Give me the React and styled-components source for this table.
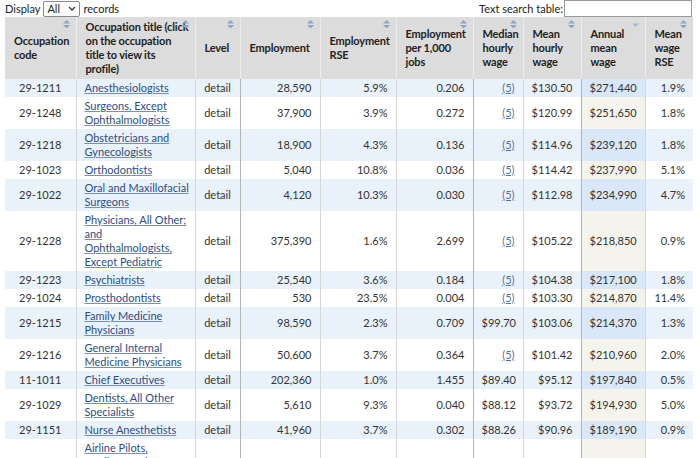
import React from "react";
import styled, { createGlobalStyle, css } from "styled-components";

const GlobalStyle = createGlobalStyle`
  html, body {
    margin: 0;
    padding: 0;
    background: #fff;
    font-family: Lato, "Liberation Sans", sans-serif;
    color: #333;
  }
`;

const columns = [
  { key: "code", width: 71, align: "center", title: "Occupation\ncode" },
  { key: "title", width: 119, align: "left", title: "Occupation title (click\non the occupation\ntitle to view its\nprofile)" },
  { key: "level", width: 45, align: "center", title: "Level" },
  { key: "emp", width: 80, align: "right", title: "Employment", strong: true },
  { key: "empRse", width: 76, align: "right", title: "Employment\nRSE" },
  { key: "perK", width: 77, align: "right", title: "Employment\nper 1,000\njobs" },
  { key: "median", width: 50, align: "right", title: "Median\nhourly\nwage", strong: true },
  { key: "meanH", width: 58, align: "right", title: "Mean\nhourly\nwage" },
  { key: "annual", width: 64, align: "right", title: "Annual\nmean\nwage", strong: true, sorted: true },
  { key: "wageRse", width: 48, align: "right", title: "Mean\nwage\nRSE" },
];

const rows = [
  ["29-1211", "Anesthesiologists", "28,590", "5.9%", "0.206", null, "$130.50", "$271,440", "1.9%"],
  ["29-1248", "Surgeons, Except\nOphthalmologists", "37,900", "3.9%", "0.272", null, "$120.99", "$251,650", "1.8%"],
  ["29-1218", "Obstetricians and\nGynecologists", "18,900", "4.3%", "0.136", null, "$114.96", "$239,120", "1.8%"],
  ["29-1023", "Orthodontists", "5,040", "10.8%", "0.036", null, "$114.42", "$237,990", "5.1%"],
  ["29-1022", "Oral and Maxillofacial\nSurgeons", "4,120", "10.3%", "0.030", null, "$112.98", "$234,990", "4.7%"],
  ["29-1228", "Physicians, All Other;\nand\nOphthalmologists,\nExcept Pediatric", "375,390", "1.6%", "2.699", null, "$105.22", "$218,850", "0.9%"],
  ["29-1223", "Psychiatrists", "25,540", "3.6%", "0.184", null, "$104.38", "$217,100", "1.8%"],
  ["29-1024", "Prosthodontists", "530", "23.5%", "0.004", null, "$103.30", "$214,870", "11.4%"],
  ["29-1215", "Family Medicine\nPhysicians", "98,590", "2.3%", "0.709", "$99.70", "$103.06", "$214,370", "1.3%"],
  ["29-1216", "General Internal\nMedicine Physicians", "50,600", "3.7%", "0.364", null, "$101.42", "$210,960", "2.0%"],
  ["11-1011", "Chief Executives", "202,360", "1.0%", "1.455", "$89.40", "$95.12", "$197,840", "0.5%"],
  ["29-1029", "Dentists, All Other\nSpecialists", "5,610", "9.3%", "0.040", "$88.12", "$93.72", "$194,930", "5.0%"],
  ["29-1151", "Nurse Anesthetists", "41,960", "3.7%", "0.302", "$88.26", "$90.96", "$189,190", "0.9%"],
  ["53-2011", "Airline Pilots,\nCopilots, and\nFlight\nEngineers", "74,100", "2.6%", "0.502", null, "$90.11", "$187,430", "0.8%"],
];

const Page = styled.div`
  font-size: 11px;
  line-height: 14px;
`;

const Toolbar = styled.div`
  display: flex;
  justify-content: space-between;
  align-items: center;
  height: 17px;
  padding: 0 8px 0 5px;
`;

const Control = styled.label`
  display: flex;
  align-items: center;
  gap: 3px;
  color: #222;
`;

const SelectBox = styled.span`
  display: inline-flex;
  align-items: center;
  justify-content: space-between;
  box-sizing: border-box;
  width: 37px;
  height: 16px;
  padding: 0 3px;
  border: 1px solid #8a8a8a;
  border-radius: 2px;
  background: #fff;
`;

const SearchInput = styled.span`
  display: inline-block;
  box-sizing: border-box;
  width: 128px;
  height: 17px;
  margin-left: -2px;
  border: 1px solid #9a9a9a;
  background: #fff;
`;

const Table = styled.table`
  margin-left: 5px;
  border-collapse: collapse;
  table-layout: fixed;
  width: 688px;
`;

const HeadCell = styled.th`
  position: relative;
  background: #dcdcdc;
  color: #222;
  font-weight: 700;
  letter-spacing: -0.15px;
  text-align: left;
  vertical-align: middle;
  white-space: pre;
  padding: 3px 2px 3px 9px;
  border-left: 1px solid #ececec;
  &:first-child {
    border-left: none;
  }
`;

const SortMark = styled.svg`
  position: absolute;
  top: 3px;
  right: 6px;
  width: 7px;
  height: 9px;
`;

const Row = styled.tr`
  background: ${({ $odd }) => ($odd ? "#e9f1fb" : "#fff")};
`;

const Cell = styled.td`
  padding: 2px 8px;
  text-align: ${({ $align }) => $align};
  white-space: pre;
  vertical-align: middle;
  border-left: 1px solid ${({ $strong }) => ($strong ? "#b4b4b4" : "#d6d6d6")};
  &:first-child {
    border-left: none;
  }
  ${({ $highlight, $odd }) =>
    $highlight &&
    css`
      background: ${$odd ? "#d9e7f8" : "#f5f4ec"};
    `}
`;

const TitleLink = styled.a`
  color: #2d4d86;
  text-decoration: underline;
  text-decoration-color: #7b8fb5;
  text-underline-offset: 1px;
`;

const NoteLink = styled.a`
  color: #5b6f9c;
  text-decoration: underline;
`;

const SortIcon = ({ sorted }) => (
  <SortMark viewBox="0 0 7 9">
    {sorted ? (
      <path d="M0 3.5 H7 L3.5 7 Z" fill="#a9b8cc" />
    ) : (
      <>
        <path d="M3.5 0 L7 3.5 H0 Z" fill="#8ea5c4" />
        <path d="M0 5 H7 L3.5 8.5 Z" fill="#8ea5c4" />
      </>
    )}
  </SortMark>
);

const App = () => (
  <Page>
    <GlobalStyle />
    <Toolbar>
      <Control>
        Display
        <SelectBox>
          <span>All</span>
          <svg width="8" height="5" viewBox="0 0 8 5">
            <path d="M1 1 L4 4 L7 1" stroke="#333" strokeWidth="1.3" fill="none" />
          </svg>
        </SelectBox>
        records
      </Control>
      <Control>
        Text search table:
        <SearchInput />
      </Control>
    </Toolbar>
    <Table>
      <colgroup>
        {columns.map((c) => (
          <col key={c.key} style={{ width: c.width }} />
        ))}
      </colgroup>
      <thead>
        <tr>
          {columns.map((c) => (
            <HeadCell key={c.key}>
              <SortIcon sorted={c.sorted} />
              {c.title}
            </HeadCell>
          ))}
        </tr>
      </thead>
      <tbody>
        {rows.map((r, i) => {
          const odd = i % 2 === 0;
          const [code, title, emp, empRse, perK, median, meanH, annual, wageRse] = r;
          const values = [
            code,
            <TitleLink href="#">{title}</TitleLink>,
            "detail",
            emp,
            empRse,
            perK,
            median || <NoteLink href="#">(5)</NoteLink>,
            meanH,
            annual,
            wageRse,
          ];
          return (
            <Row key={code} $odd={odd}>
              {columns.map((c, j) => (
                <Cell
                  key={c.key}
                  $align={c.align}
                  $strong={c.strong}
                  $highlight={c.key === "annual"}
                  $odd={odd}
                >
                  {values[j]}
                </Cell>
              ))}
            </Row>
          );
        })}
      </tbody>
    </Table>
  </Page>
);

export default App;
